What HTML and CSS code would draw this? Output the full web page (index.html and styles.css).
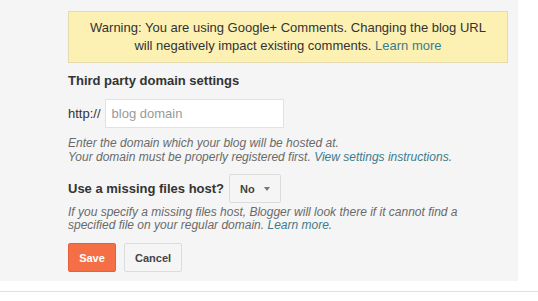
FILE: index.html
```html
<!DOCTYPE html>
<html lang="en">
<head>
  <meta charset="UTF-8">
  <title>Blog address settings</title>
  <meta name="viewport" content="width=device-width, initial-scale=1">
  <link rel="stylesheet" href="styles.css">
</head>
<body>
  <div class="panel">
    <div class="warning">
      Warning: You are using Google+ Comments. Changing the blog URL<br>
      will negatively impact existing comments. <a href="#">Learn more</a>
    </div>

    <h3 class="section-title">Third party domain settings</h3>

    <div class="domain-row">
      <span class="prefix">http://</span>
      <input class="domain-input" placeholder="blog domain">
    </div>

    <p class="hint">
      Enter the domain which your blog will be hosted at.<br>
      Your domain must be properly registered first. <a href="#">View settings instructions</a>.
    </p>

    <div class="host-row">
      <span class="host-label">Use a missing files host?</span>
      <button class="select">No <span class="caret"></span></button>
    </div>

    <p class="hint hint-host">
      If you specify a missing files host, Blogger will look there if it cannot find a<br>
      specified file on your regular domain. <a href="#">Learn more</a>.
    </p>

    <div class="actions">
      <button class="btn btn-save">Save</button>
      <button class="btn btn-cancel">Cancel</button>
    </div>
  </div>
  <div class="divider"></div>
</body>
</html>
```

FILE: styles.css
```css
body {
  margin: 0;
  background: #fff;
  font-family: "Liberation Sans", Arial, sans-serif;
  color: #333;
}
a {
  color: #3b7c8c;
  text-decoration: none;
}
.panel {
  width: 450px;
  height: 270px;
  padding: 11px 0 0 68px;
  background: #f5f5f5;
}
.warning {
  box-sizing: border-box;
  width: 440px;
  height: 52px;
  padding: 7px 0;
  background: #fcf0b3;
  border: 1px solid #e4dcb0;
  text-align: center;
  font-size: 13px;
  line-height: 18px;
  color: #333;
}
.section-title {
  margin: 10px 0 0;
  font-size: 13px;
  line-height: 16px;
  font-weight: bold;
  color: #333;
}
.domain-row {
  display: flex;
  align-items: center;
  gap: 4px;
  margin-top: 10px;
  font-size: 13px;
}
.domain-input {
  box-sizing: border-box;
  width: 179px;
  height: 29px;
  padding: 0 6px;
  border: 1px solid #e2e2e2;
  background: #fff;
  font-family: inherit;
  font-size: 13px;
  outline: none;
}
.domain-input::placeholder {
  color: #999;
}
.hint {
  margin: 8px 0 0;
  font-size: 12px;
  line-height: 14px;
  font-style: italic;
  color: #6a6a6a;
}
.host-row {
  display: flex;
  align-items: center;
  gap: 5px;
  margin-top: 10px;
}
.host-label {
  font-size: 13px;
  font-weight: bold;
  color: #333;
}
.select {
  display: flex;
  align-items: center;
  gap: 9px;
  box-sizing: border-box;
  height: 29px;
  padding: 0 10px;
  border: 1px solid #dcdcdc;
  border-radius: 2px;
  background: #f5f5f5;
  font-family: inherit;
  font-size: 11px;
  font-weight: bold;
  color: #444;
}
.caret {
  width: 0;
  height: 0;
  border-left: 3px solid transparent;
  border-right: 3px solid transparent;
  border-top: 4px solid #777;
}
.hint-host {
  margin-top: 3px;
  line-height: 13px;
}
.actions {
  display: flex;
  gap: 8px;
  margin-top: 11px;
}
.btn {
  box-sizing: border-box;
  height: 29px;
  padding: 0 10px;
  border-radius: 2px;
  font-family: inherit;
  font-size: 11px;
  font-weight: bold;
}
.btn-save {
  width: 48px;
  border: 1px solid #e3613a;
  background: #f46f45;
  color: #fff;
}
.btn-cancel {
  width: 58px;
  border: 1px solid #dcdcdc;
  background: #f5f5f5;
  color: #444;
}
.divider {
  margin-top: 10px;
  height: 1px;
  background: #e0e0e0;
}
```
